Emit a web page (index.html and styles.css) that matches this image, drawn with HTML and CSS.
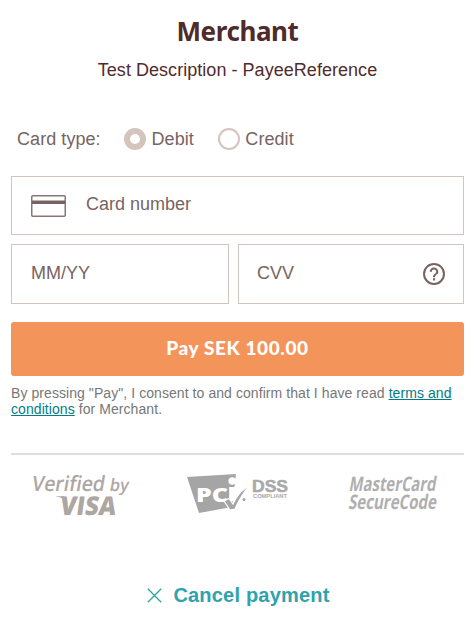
FILE: index.html
```html
<!DOCTYPE html>
<html lang="en">
<head>
<meta charset="utf-8">
<title>Payment</title>
<link rel="stylesheet" href="styles.css">
</head>
<body>
<main class="payment">
  <header>
    <h1 class="merchant">Merchant</h1>
    <p class="description">Test Description - PayeeReference</p>
  </header>
  <div class="card-type">
    <span class="type-label">Card type:</span>
    <span class="option"><span class="radio selected"></span>Debit</span>
    <span class="option"><span class="radio"></span>Credit</span>
  </div>
  <div class="fields">
    <div class="field number">
      <svg class="card-icon" width="35" height="22" viewBox="0 0 35 22"><rect x=".75" y=".75" width="33.5" height="20.5" rx="1" fill="none" stroke="#887674" stroke-width="1.5"/><path d="M1 5.4h33v3.7H1z" fill="#776462"/></svg>
      <span>Card number</span>
    </div>
    <div class="field"><span>MM/YY</span></div>
    <div class="field cvv"><span>CVV</span>
      <svg class="help" width="22" height="22" viewBox="0 0 22 22" fill="#776462"><path d="M10 17.4h2.1v-2.1H10zM11 0a11 11 0 1 0 0 22 11 11 0 0 0 0-22zm0 19.9A8.9 8.9 0 1 1 11 2a8.9 8.9 0 0 1 0 17.9zM11 4.5a4.3 4.3 0 0 0-4.3 4.3h2.1a2.2 2.2 0 1 1 4.4 0c0 2.2-3.2 1.9-3.2 5.4h2.1c0-2.4 3.2-2.7 3.2-5.4A4.3 4.3 0 0 0 11 4.5z"/></svg>
    </div>
  </div>
  <button class="pay"><span>Pay SEK 100.00</span></button>
  <p class="consent">By pressing "Pay", I consent to and confirm that I have read <a href="#">terms and conditions</a> for Merchant.</p>
  <footer class="logos">
    <svg class="logo" width="100" height="46" viewBox="0 0 100 46">
      <g fill="#aea6a2" font-family="Open Sans">
        <text transform="translate(0 17.5) skewX(-10)" font-size="21" font-weight="600" textLength="73" lengthAdjust="spacingAndGlyphs">Verified</text>
        <text transform="translate(78 17.5) skewX(-10)" font-size="17" font-weight="600" textLength="19" lengthAdjust="spacingAndGlyphs">by</text>
        <text transform="translate(28 42) skewX(-8)" font-size="26" font-weight="800" textLength="56" lengthAdjust="spacingAndGlyphs">VISA</text>
      </g>
      <path d="M24 23.2h9l2 5c-2-3-6-4-11-5z" fill="#aea6a2"/>
    </svg>
    <svg class="logo" width="104" height="46" viewBox="0 0 104 46">
      <path d="M0 4 49 1l-4 33-33 6z" fill="#a5a5a5"/>
      <text x="9" y="29" font-family="Open Sans" font-size="19.5" font-weight="800" fill="#fff" textLength="32" lengthAdjust="spacingAndGlyphs">PC</text>
      <path d="M42.2 14h6v14h-6z" fill="#fff"/><circle cx="45.2" cy="8" r="3.8" fill="#fff"/>
      <path d="m37 28 5-2.5 4 5.5C50 22 56 15.500 64 11.500 57 18 52 27 48 36l-5 1z" fill="#a5a5a5" stroke="#fff" stroke-width="1.2"/>
      <circle cx="57" cy="26.500" r="1.500" fill="#a5a5a5"/>
      <g font-family="Liberation Sans" font-weight="700" fill="#a9a9a9">
        <text x="65" y="18.500" font-size="16" stroke="#a9a9a9" stroke-width=".5" textLength="36" lengthAdjust="spacingAndGlyphs">DSS</text>
        <text x="66" y="25" font-size="5" textLength="34" lengthAdjust="spacingAndGlyphs">COMPLIANT</text>
      </g>
    </svg>
    <svg class="logo" width="92" height="46" viewBox="0 0 92 46">
      <g fill="#afafaf" font-family="Open Sans" font-weight="700" font-size="20">
        <text transform="translate(1.500 18) skewX(-10)" textLength="87" lengthAdjust="spacingAndGlyphs">MasterCard</text>
        <text transform="translate(1 36) skewX(-10)" textLength="88" lengthAdjust="spacingAndGlyphs">SecureCode</text>
      </g>
    </svg>
  </footer>
  <a class="cancel" href="#"><svg width="15" height="15" viewBox="0 0 15 15"><path d="m.8.8 13.4 13.4M14.2.8.8 14.2" fill="none" stroke="#2da3a8" stroke-width="1.3"/></svg><span>Cancel payment</span></a>
</main>
</body>
</html>
```
FILE: styles.css
```css
* { box-sizing: border-box; }
body {
  margin: 0;
  background: #fff;
  font-family: "Liberation Sans", Arial, sans-serif;
  color: #776462;
}
.payment { padding: 13px 11px 0; height: 620px; }
.merchant {
  margin: 0;
  font: 700 26px/36px "Noto Sans", sans-serif;
  letter-spacing: -.4px;
  color: #512b2b;
  text-align: center;
}
.description {
  margin: 10px 0 0;
  font-size: 18px;
  line-height: 22px;
  letter-spacing: .04px;
  text-align: center;
  color: #512b2b;
}
.card-type {
  display: flex;
  align-items: center;
  height: 22px;
  margin: 47px 0 0 6px;
  font-size: 18px;
  letter-spacing: .06px;
}
.type-label { width: 107px; }
.option { display: flex; align-items: center; gap: 5.5px; margin-right: 24px; }
.radio { width: 22px; height: 22px; border: 2px solid #d4c4bc; border-radius: 50%; }
.radio.selected { border-width: 6px; }
.fields {
  display: grid;
  grid-template-columns: 218px 226px;
  grid-template-rows: 59px 60px;
  gap: 9px;
  margin-top: 26px;
}
.field {
  display: flex;
  align-items: center;
  padding: 0 19px 2px;
  border: 1px solid #d4c4bc;
  font-size: 18px;
}
.number { grid-column: 1 / -1; padding-bottom: 3px; }
.card-icon { margin: 4px 20px 0 0; }
.cvv { justify-content: space-between; padding-left: 18px; padding-right: 18px; }
.help { margin-top: 2px; }
.pay {
  display: block;
  width: 100%;
  height: 54px;
  margin-top: 18px;
  padding: 0 0 2px;
  border: 0;
  border-radius: 3px;
  background: #f3955b;
  color: #fff;
  font: 900 19px/26px Lato, sans-serif;
  letter-spacing: .6px;
}
.consent {
  margin: 9px 0 0;
  font-size: 14px;
  line-height: 16px;
  letter-spacing: .07px;
  color: #777;
}
.consent a { color: #007c89; }
.logos {
  display: flex;
  justify-content: space-between;
  margin-top: 36px;
  padding: 18px 25px 0 20px;
  border-top: 2px solid #ddd;
  height: 66px;
}
.logo { display: block; overflow: visible; }
.cancel {
  display: flex;
  align-items: center;
  justify-content: center;
  gap: 11px;
  margin-top: 64px;
  padding-left: 2px;
  color: #2fa3ab;
  font-size: 20px;
  line-height: 24px;
  letter-spacing: .2px;
  font-weight: 700;
  text-decoration: none;
}
```
